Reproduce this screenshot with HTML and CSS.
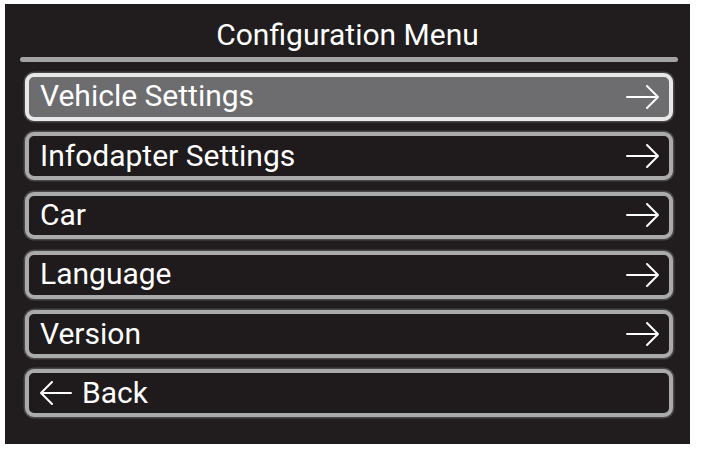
FILE: index.html
```html
<!DOCTYPE html>
<html>
<head>
<meta charset="utf-8">
<link rel="stylesheet" href="styles.css">
</head>
<body>
<div class="panel">
  <div class="title">Configuration Menu</div>
  <div class="sep"></div>
  <div class="menu">
    <div class="item selected"><span class="label">Vehicle Settings</span><svg class="arrow" viewBox="0 0 34 26"><path d="M1 13H32M21 2L32 13L21 24"/></svg></div>
    <div class="item"><span class="label">Infodapter Settings</span><svg class="arrow" viewBox="0 0 34 26"><path d="M1 13H32M21 2L32 13L21 24"/></svg></div>
    <div class="item"><span class="label">Car</span><svg class="arrow" viewBox="0 0 34 26"><path d="M1 13H32M21 2L32 13L21 24"/></svg></div>
    <div class="item"><span class="label">Language</span><svg class="arrow" viewBox="0 0 34 26"><path d="M1 13H32M21 2L32 13L21 24"/></svg></div>
    <div class="item"><span class="label">Version</span><svg class="arrow" viewBox="0 0 34 26"><path d="M1 13H32M21 2L32 13L21 24"/></svg></div>
    <div class="item back"><svg class="arrow back-arrow" viewBox="0 0 34 26"><path d="M31 13H1M12 2L1 13L12 24"/></svg><span class="label">Back</span></div>
  </div>
</div>
</body>
</html>
```
FILE: styles.css
```css
html, body {
  margin: 0;
  padding: 0;
  background: #ffffff;
}
body {
  padding: 4px 0 0 5px;
  font-family: Roboto, "Liberation Sans", sans-serif;
}
.panel {
  width: 685px;
  height: 440px;
  background: #211d1e;
  box-sizing: border-box;
  padding: 0 17px 0 20px;
  display: flex;
  flex-direction: column;
}
.title {
  color: #ffffff;
  font-size: 30px;
  text-align: center;
  height: 53px;
  box-sizing: border-box;
  padding-top: 16px;
  line-height: 30px;
  margin-right: 3px;
}
.sep {
  height: 5px;
  background: #a3a3a3;
  border-radius: 3px;
  margin: 0 -5px 0 -5px;
}
.menu {
  display: flex;
  flex-direction: column;
  gap: 11.5px;
  margin-top: 11px;
}
.item {
  height: 47.8px;
  box-sizing: border-box;
  border: 4px solid #aaaaaa;
  border-radius: 9px;
  box-shadow: 0 0 0 1.5px #4a4748;
  background: #1f1b1c;
  display: flex;
  align-items: center;
  padding: 0 9px 0 11px;
  color: #ffffff;
  font-size: 30px;
}
.item.selected {
  background: #6d6d6f;
  border-color: #e8e8e8;
}
.label {
  flex: 1;
  line-height: 1;
  padding-bottom: 1px;
}
.arrow {
  width: 34px;
  height: 26px;
  fill: none;
  stroke: #ffffff;
  stroke-width: 2;
  stroke-linecap: round;
  stroke-linejoin: round;
}
.back-arrow {
  margin-right: 8px;
}
```
